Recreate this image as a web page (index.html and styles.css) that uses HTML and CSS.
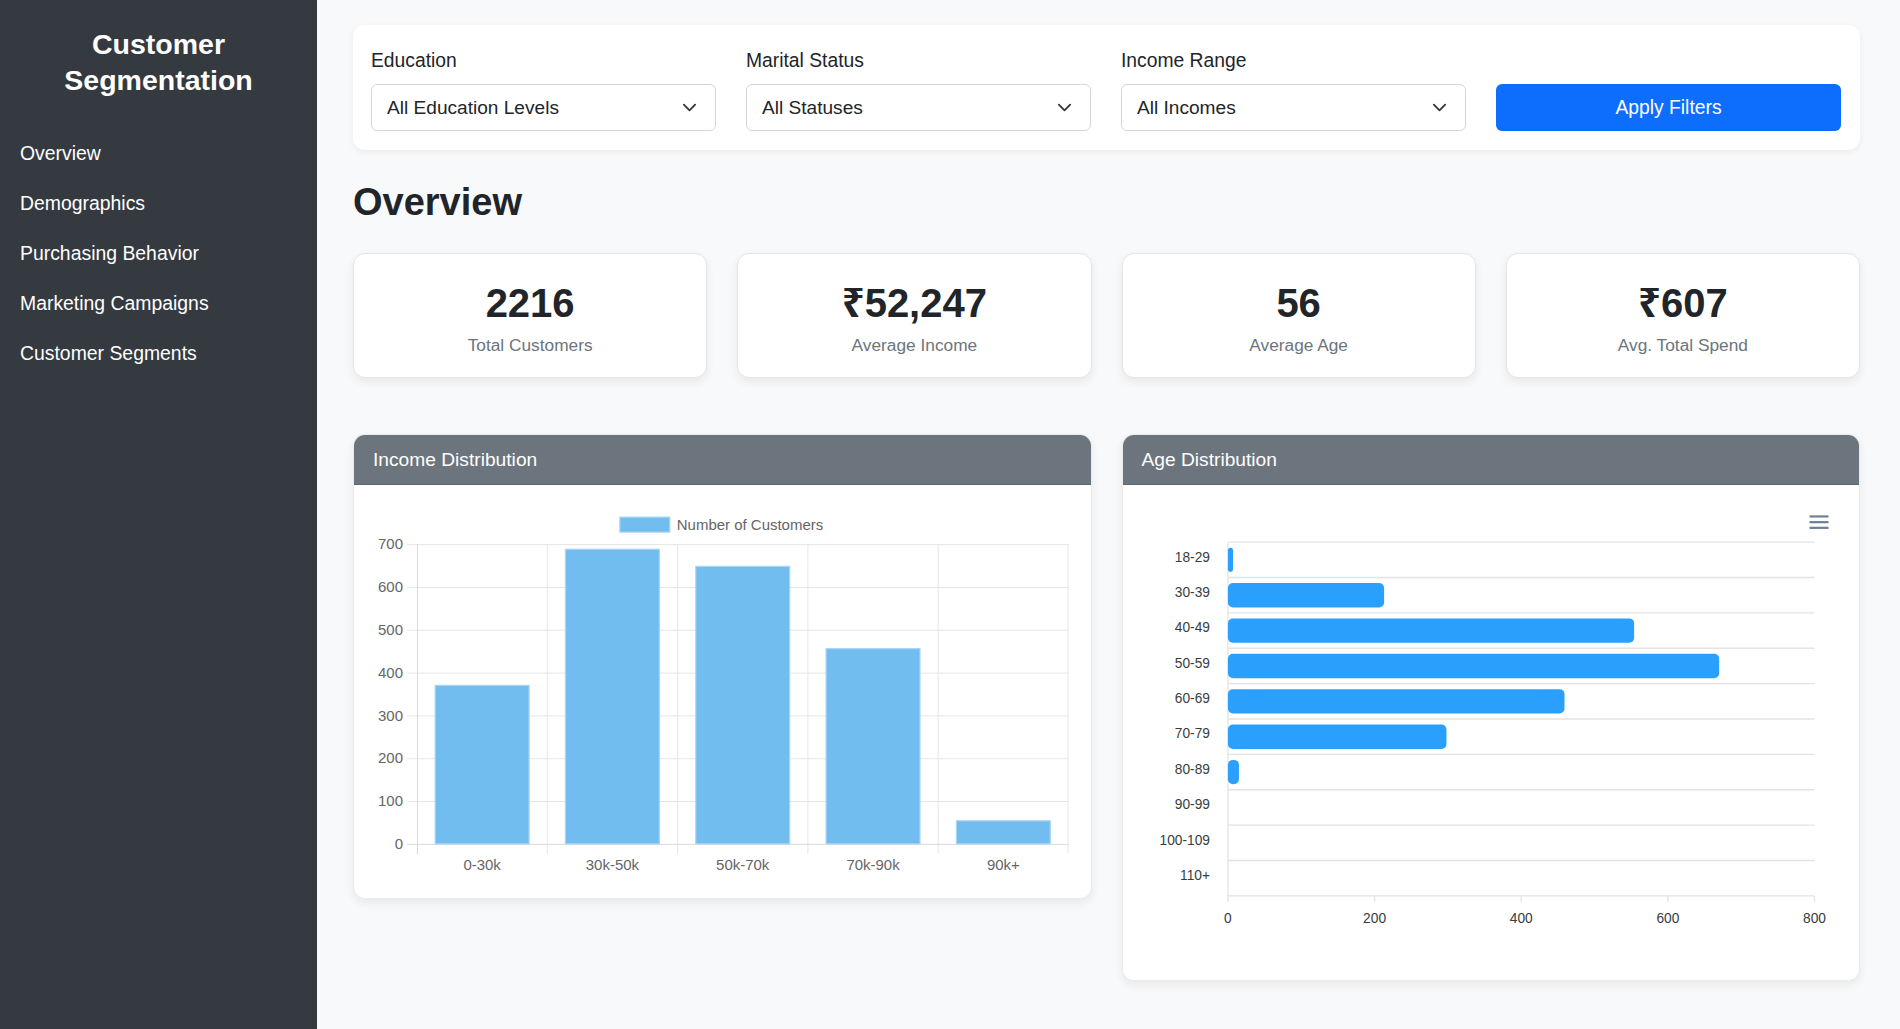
FILE: index.html
```html
<!DOCTYPE html>
<html lang="en">
<head>
<meta charset="utf-8">
<title>Customer Segmentation</title>
<link rel="stylesheet" href="styles.css">
</head>
<body>
<div class="layout">
  <aside class="sidebar">
    <h1 class="brand">Customer<br>Segmentation</h1>
    <ul class="nav">
      <li><a href="#">Overview</a></li>
      <li><a href="#">Demographics</a></li>
      <li><a href="#">Purchasing Behavior</a></li>
      <li><a href="#">Marketing Campaigns</a></li>
      <li><a href="#">Customer Segments</a></li>
    </ul>
  </aside>
  <main class="main">
    <section class="filter-card">
      <div class="field">
        <label>Education</label>
        <div class="select"><span>All Education Levels</span><svg class="chev" viewBox="0 0 16 16" width="15" height="15"><path d="m2 5 6 6 6-6" fill="none" stroke="#343a40" stroke-width="2" stroke-linecap="round" stroke-linejoin="round"/></svg></div>
      </div>
      <div class="field">
        <label>Marital Status</label>
        <div class="select"><span>All Statuses</span><svg class="chev" viewBox="0 0 16 16" width="15" height="15"><path d="m2 5 6 6 6-6" fill="none" stroke="#343a40" stroke-width="2" stroke-linecap="round" stroke-linejoin="round"/></svg></div>
      </div>
      <div class="field">
        <label>Income Range</label>
        <div class="select"><span>All Incomes</span><svg class="chev" viewBox="0 0 16 16" width="15" height="15"><path d="m2 5 6 6 6-6" fill="none" stroke="#343a40" stroke-width="2" stroke-linecap="round" stroke-linejoin="round"/></svg></div>
      </div>
      <div class="field field-btn">
        <button class="btn">Apply Filters</button>
      </div>
    </section>

    <h2 class="title">Overview</h2>

    <section class="stats">
      <div class="stat"><div class="stat-value">2216</div><div class="stat-label">Total Customers</div></div>
      <div class="stat"><div class="stat-value">₹52,247</div><div class="stat-label">Average Income</div></div>
      <div class="stat"><div class="stat-value">56</div><div class="stat-label">Average Age</div></div>
      <div class="stat"><div class="stat-value">₹607</div><div class="stat-label">Avg. Total Spend</div></div>
    </section>

    <section class="charts">
      <div class="chart-card">
        <div class="chart-header">Income Distribution</div>
        <div class="chart-body">
          <svg class="chart-svg income-svg" viewBox="0 0 697 373">
            <g class="grid">
              <line x1="33" x2="695" y1="39.5" y2="39.5"/>
              <line x1="33" x2="695" y1="82.4" y2="82.4"/>
              <line x1="33" x2="695" y1="125.2" y2="125.2"/>
              <line x1="33" x2="695" y1="168.1" y2="168.1"/>
              <line x1="33" x2="695" y1="210.9" y2="210.9"/>
              <line x1="33" x2="695" y1="253.8" y2="253.8"/>
              <line x1="33" x2="695" y1="296.6" y2="296.6"/>
              <line x1="173.4" x2="173.4" y1="39" y2="349"/>
              <line x1="303.8" x2="303.8" y1="39" y2="349"/>
              <line x1="434.2" x2="434.2" y1="39" y2="349"/>
              <line x1="564.6" x2="564.6" y1="39" y2="349"/>
              <line x1="694.5" x2="694.5" y1="39" y2="349"/>
            </g>
            <g class="axis">
              <line x1="33" x2="695" y1="339.5" y2="339.5"/>
              <line x1="43.5" x2="43.5" y1="39" y2="349"/>
            </g>
            <g class="ylab">
              <text x="29" y="44.2">700</text>
              <text x="29" y="87.1">600</text>
              <text x="29" y="129.9">500</text>
              <text x="29" y="172.8">400</text>
              <text x="29" y="215.6">300</text>
              <text x="29" y="258.5">200</text>
              <text x="29" y="301.3">100</text>
              <text x="29" y="344.2">0</text>
            </g>
            <g class="bar">
              <rect x="61.2" y="180.4" width="94" height="158.6"/>
              <rect x="191.6" y="44.1" width="94" height="294.9"/>
              <rect x="322" y="61.3" width="94" height="277.7"/>
              <rect x="452.4" y="143.6" width="94" height="195.4"/>
              <rect x="582.8" y="315.9" width="94" height="23.1"/>
            </g>
            <g class="xlab">
              <text x="108.2" y="365.5">0-30k</text>
              <text x="238.6" y="365.5">30k-50k</text>
              <text x="369" y="365.5">50k-70k</text>
              <text x="499.4" y="365.5">70k-90k</text>
              <text x="629.8" y="365.5">90k+</text>
            </g>
            <rect class="bar legend-box" x="246" y="12" width="50" height="15"/>
            <text class="legend" x="303" y="24.4">Number of Customers</text>
          </svg>
        </div>
      </div>

      <div class="chart-card">
        <div class="chart-header">Age Distribution</div>
        <div class="chart-body">
          <svg class="chart-svg age-svg" viewBox="0 0 697 455">
            <g class="agrid">
              <line x1="85" x2="672" y1="37" y2="37"/>
              <line x1="85" x2="672" y1="72.4" y2="72.4"/>
              <line x1="85" x2="672" y1="107.8" y2="107.8"/>
              <line x1="85" x2="672" y1="143.2" y2="143.2"/>
              <line x1="85" x2="672" y1="178.6" y2="178.6"/>
              <line x1="85" x2="672" y1="214" y2="214"/>
              <line x1="85" x2="672" y1="249.4" y2="249.4"/>
              <line x1="85" x2="672" y1="284.8" y2="284.8"/>
              <line x1="85" x2="672" y1="320.2" y2="320.2"/>
              <line x1="85" x2="672" y1="355.6" y2="355.6"/>
              <line x1="85" x2="672" y1="391" y2="391"/>
              <line x1="85" x2="85" y1="37" y2="397"/>
              <line x1="231.75" x2="231.75" y1="391" y2="397"/>
              <line x1="378.5" x2="378.5" y1="391" y2="397"/>
              <line x1="525.25" x2="525.25" y1="391" y2="397"/>
              <line x1="672" x2="672" y1="391" y2="397"/>
            </g>
            <g class="abar">
              <rect x="85" y="42.5" width="5.1" height="24.4" rx="2.5"/>
              <rect x="85" y="77.9" width="156.3" height="24.4" rx="5"/>
              <rect x="85" y="113.3" width="406.5" height="24.4" rx="5"/>
              <rect x="85" y="148.7" width="491.6" height="24.4" rx="5"/>
              <rect x="85" y="184.1" width="336.8" height="24.4" rx="5"/>
              <rect x="85" y="219.5" width="218.7" height="24.4" rx="5"/>
              <rect x="85" y="254.9" width="11" height="24.4" rx="5"/>
            </g>
            <g class="aylab">
              <text x="67" y="56.4">18-29</text>
              <text x="67" y="91.8">30-39</text>
              <text x="67" y="127.2">40-49</text>
              <text x="67" y="162.6">50-59</text>
              <text x="67" y="198">60-69</text>
              <text x="67" y="233.4">70-79</text>
              <text x="67" y="268.8">80-89</text>
              <text x="67" y="304.2">90-99</text>
              <text x="67" y="339.6">100-109</text>
              <text x="67" y="375">110+</text>
            </g>
            <g class="axlab">
              <text x="85" y="418.3">0</text>
              <text x="231.75" y="418.3">200</text>
              <text x="378.5" y="418.3">400</text>
              <text x="525.25" y="418.3">600</text>
              <text x="672" y="418.3">800</text>
            </g>
            <g class="menu">
              <line x1="667" x2="686" y1="11.3" y2="11.3"/>
              <line x1="667" x2="686" y1="17" y2="17"/>
              <line x1="667" x2="686" y1="22.7" y2="22.7"/>
            </g>
          </svg>
        </div>
      </div>
    </section>
  </main>
</div>
</body>
</html>
```

FILE: styles.css
```css
html, body {
  margin: 0;
  padding: 0;
}
body {
  font-family: "Liberation Sans", Arial, "Noto Sans", "DejaVu Sans", sans-serif;
  color: #212529;
  background: #f8f9fa;
}
.layout {
  display: grid;
  grid-template-columns: 317px 1fr;
  min-height: 100vh;
}

/* Sidebar */
.sidebar {
  background: #343a40;
  color: #fff;
  padding-top: 26px;
}
.brand {
  margin: 0 0 30px;
  font-size: 28.5px;
  line-height: 36px;
  font-weight: 700;
  text-align: center;
}
.nav {
  list-style: none;
  margin: 0;
  padding: 0;
}
.nav a {
  display: block;
  padding: 10px 20px;
  line-height: 30px;
  font-size: 19.4px;
  color: #fff;
  text-decoration: none;
}

/* Main */
.main {
  padding: 25px 40px 0 36px;
  min-width: 0;
}
.filter-card {
  background: #fff;
  border-radius: 12px;
  box-shadow: 0 2px 6px rgba(0, 0, 0, 0.06);
  padding: 21px 19px 19px 18px;
  display: grid;
  grid-template-columns: repeat(4, 1fr);
  column-gap: 30px;
}
.field {
  display: flex;
  flex-direction: column;
}
.field label {
  font-size: 19.3px;
  line-height: 29px;
  margin-bottom: 9px;
}
.select {
  height: 47px;
  box-sizing: border-box;
  border: 1px solid #d3d7db;
  border-radius: 6px;
  display: flex;
  align-items: center;
  justify-content: space-between;
  padding: 0 18px 0 15px;
  font-size: 19.1px;
  background: #fff;
}
.chev {
  display: block;
  flex: none;
}
.field-btn {
  justify-content: flex-end;
}
.btn {
  height: 47px;
  border: none;
  border-radius: 6px;
  background: #0d6efd;
  color: #fff;
  font-family: inherit;
  font-size: 19.3px;
  cursor: pointer;
}

.title {
  font-size: 38px;
  line-height: 46px;
  font-weight: 700;
  margin: 29px 0 28px;
}

.stats {
  display: grid;
  grid-template-columns: repeat(4, 1fr);
  gap: 30px;
  margin-bottom: 56px;
}
.stat {
  background: #fff;
  border: 1px solid #e3e5e8;
  border-radius: 12px;
  box-shadow: 0 4px 10px rgba(0, 0, 0, 0.07);
  padding: 25px 20px 19px;
  text-align: center;
}
.stat-value {
  font-size: 40px;
  line-height: 48px;
  font-weight: 700;
  margin-bottom: 5px;
}
.stat-label {
  font-size: 17.3px;
  line-height: 26px;
  color: #6c757d;
}

.charts {
  display: grid;
  grid-template-columns: 1fr 1fr;
  gap: 30px;
  align-items: start;
}
.chart-card {
  background: #fff;
  border: 1px solid rgba(0, 0, 0, 0.08);
  border-radius: 12px;
  box-shadow: 0 4px 10px rgba(0, 0, 0, 0.07);
  overflow: hidden;
}
.chart-header {
  background: #6c757d;
  color: #fff;
  padding: 10px 19px 9px;
  line-height: 30px;
  font-size: 19.2px;
  border-bottom: 1px solid rgba(0, 0, 0, 0.12);
}
.chart-body {
  padding: 20px;
}
.chart-svg {
  display: block;
  width: 100%;
}
.income-svg {
  height: 373px;
}
.age-svg {
  height: 455px;
}

/* Chart 1 (bar) */
.grid line {
  stroke: #e6e6e6;
  stroke-width: 1;
}
.axis line {
  stroke: #d9d9d9;
  stroke-width: 1;
}
.bar rect, .legend-box {
  fill: #72bdf0;
  stroke: #a9d6f5;
  stroke-width: 1.2;
}
.ylab text, .xlab text, .legend {
  font-family: "Liberation Sans", Arial, sans-serif;
  font-size: 15px;
  fill: #666;
}
.ylab text {
  text-anchor: end;
}
.xlab text {
  text-anchor: middle;
}

/* Chart 2 (horizontal bar) */
.agrid line {
  stroke: #e3e3e3;
  stroke-width: 1.3;
}
.abar rect {
  fill: #2a9ffb;
}
.aylab text, .axlab text {
  font-family: "Liberation Sans", Arial, sans-serif;
  font-size: 13.75px;
  fill: #373d3f;
}
.aylab text {
  text-anchor: end;
}
.axlab text {
  text-anchor: middle;
}
.menu line {
  stroke: #6e8192;
  stroke-width: 2.2;
}
```
